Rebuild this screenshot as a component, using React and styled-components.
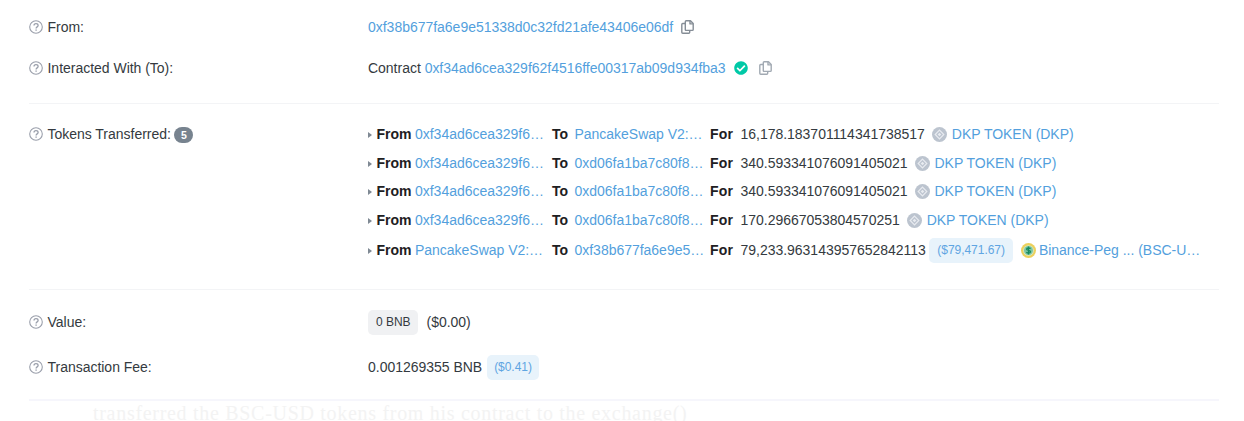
import React from "react";
import styled, { createGlobalStyle } from "styled-components";
import { FaCheckCircle } from "react-icons/fa";

const GlobalStyle = createGlobalStyle`
  * { box-sizing: border-box; }
  body {
    margin: 0;
    background: #fff;
    color: #343a40;
    font: 14px/20px "Liberation Sans", Arial, sans-serif;
    letter-spacing: -0.02px;
    overflow: hidden;
  }
`;

const Page = styled.main`
  width: 1244px;
  height: 421px;
  overflow: hidden;
  padding: 0 25px 0 29px;
`;

const Section = styled.section`
  height: ${(p) => p.$height}px;
  padding-top: ${(p) => p.$top}px;
  border-bottom: ${(p) => p.$line || 1}px solid ${(p) => p.$lineColor || "#f3f4f6"};
`;

const Row = styled.div`
  display: grid;
  grid-template-columns: 339px 1fr;
  align-items: start;
  margin-bottom: ${(p) => p.$gap || 0}px;
`;

const Label = styled.div`
  display: flex;
  align-items: center;
  height: 20px;
  white-space: pre;
`;

const HelpSvg = styled.svg`
  width: 14px;
  height: 14px;
  margin-right: 4.5px;
  fill: none;
  stroke: #9a9fab;
  flex: none;
`;

const Count = styled.span`
  width: 19px;
  height: 16px;
  margin: 2px 0 0 3.5px;
  border-radius: 8px;
  background: #77838f;
  color: #fff;
  font-size: 10.5px;
  font-weight: 700;
  line-height: 16px;
  text-align: center;
`;

const Value = styled.div`
  display: flex;
  align-items: center;
  height: 20px;
  white-space: pre;
`;

const Link = styled.a`
  color: #539fdd;
`;

const CopySvg = styled.svg`
  width: 13px;
  height: 14px;
  margin-left: ${(p) => p.$gap}px;
  fill: none;
  stroke: ${(p) => p.$tone};
  stroke-width: 1.4;
  stroke-linejoin: round;
  flex: none;
`;

const Verified = styled(FaCheckCircle)`
  width: 14px;
  height: 14px;
  margin-left: 8px;
  color: #00c9a7;
`;

const Transfers = styled.div`
  display: flex;
  flex-direction: column;
`;

const Transfer = styled.div`
  display: grid;
  grid-template-columns: 8.5px 38.5px 137px 22.5px 135.5px 30.5px auto;
  grid-template-rows: 20px;
  justify-content: start;
  align-items: center;
  height: 20px;
  margin-bottom: ${(p) => p.$gap}px;
  white-space: nowrap;
`;

const Caret = styled.i`
  width: 0;
  height: 0;
  margin-top: 2px;
  border: 3.5px solid transparent;
  border-left: 4px solid #7f8994;
  border-right: 0;
`;

const Strong = styled.b`
  color: #1e2022;
  letter-spacing: ${(p) => p.$track || 0}px;
`;

const Amount = styled.div`
  display: flex;
  align-items: center;
  height: 20px;
`;

const Pill = styled.span`
  height: 25px;
  padding: 0 ${(p) => p.$pad || 8}px;
  margin: 1px ${(p) => p.$right || 0}px 0 ${(p) => p.$left || 0}px;
  border-radius: 5px;
  background: ${(p) => (p.$plain ? "#f0f1f3" : "#e8f3fb")};
  color: ${(p) => (p.$plain ? "#343a40" : "#5fa5e2")};
  font-size: 12px;
  line-height: 25px;
  letter-spacing: -0.04px;
  flex: none;
`;

const IconSvg = styled.svg`
  width: 15px;
  height: 15px;
  margin: 0 ${(p) => p.$right}px 0 ${(p) => p.$left}px;
  flex: none;
`;

const Excerpt = styled.p`
  margin: 3px 0 0 64px;
  color: #f3f3f3;
  font: 20px/18px "Liberation Serif", serif;
  letter-spacing: 0.7px;
  height: 18px;
  white-space: nowrap;
`;

function HelpIcon() {
  return (
    <HelpSvg viewBox="0 0 14 14">
      <circle cx="7" cy="7" r="6.3" strokeWidth="1.1" />
      <path d="M5 5.6C5 4.3 5.8 3.7 7 3.7s2.1.7 2.1 1.8C9.1 6.9 7.1 6.9 7.1 8.5" strokeWidth="1.3" />
      <path d="M7.1 9.4v1.300" strokeWidth="1.4" />
    </HelpSvg>
  );
}

function CopyIcon({ gap, tone }) {
  return (
    <CopySvg $gap={gap} $tone={tone} viewBox="0 0 13 14">
      <path d="M5.2.8h4.300L12.2 3.5v6q0 .9-.9.9H5.2q-.9 0-.9-.9V1.7q0-.9.9-.9z" />
      <path d="M9 .9v3h3.1" />
      <path d="M4.2 3.5H1.7q-.9 0-.9.9v7.9q0 .9.9.9h6.1q.9 0 .9-.9v-1.7" />
    </CopySvg>
  );
}

function TokenIcon() {
  return (
    <IconSvg $left={7.5} $right={4.5} viewBox="0 0 15 15">
      <circle cx="7.5" cy="7.5" r="7.5" fill="#bcc4cf" />
      <path d="M7.5 3.2 11.8 7.5 7.5 11.8 3.2 7.5z" fill="none" stroke="#e8ebf0" strokeWidth="1.2" />
      <path d="M7.5 5.7 9.3 7.5 7.5 9.3 5.7 7.5z" fill="#e8ebf0" />
    </IconSvg>
  );
}

function DollarIcon() {
  return (
    <IconSvg $left={0} $right={3} viewBox="0 0 15 15">
      <circle cx="7.5" cy="7.5" r="7.5" fill="#ecd05c" />
      <circle cx="7.5" cy="7.5" r="5.3" fill="#d3e9c8" />
      <circle cx="7.5" cy="7.5" r="4.5" fill="#7cc5a3" />
      <path
        d="M9.5 5.7C8.7 4.7 5.6 4.7 5.6 6.2c0 1.500 3.900 1 3.900 2.600 0 1.600-3.100 1.500-4.100.4M7.5 3.500v8"
        fill="none"
        stroke="#168a5e"
        strokeWidth="1.3"
      />
    </IconSvg>
  );
}

const transfers = [
  { from: "0xf34ad6cea329f6…", to: "PancakeSwap V2:…", amount: "16,178.183701114341738517", gap: 9 },
  { from: "0xf34ad6cea329f6…", to: "0xd06fa1ba7c80f8…", amount: "340.593341076091405021", gap: 8 },
  { from: "0xf34ad6cea329f6…", to: "0xd06fa1ba7c80f8…", amount: "340.593341076091405021", gap: 9 },
  { from: "0xf34ad6cea329f6…", to: "0xd06fa1ba7c80f8…", amount: "170.29667053804570251", gap: 10 },
  { from: "PancakeSwap V2:…", to: "0xf38b677fa6e9e5…", amount: "79,233.963143957652842113", usd: "($79,471.67)", gap: 0 },
];

export default function App() {
  return (
    <>
      <GlobalStyle />
      <Page>
        <Section $height={104} $top={17}>
          <Row $gap={21}>
            <Label><HelpIcon />From:</Label>
            <Value>
              <Link>0xf38b677fa6e9e51338d0c32fd21afe43406e06df</Link>
              <CopyIcon gap={7.5} tone="#858d96" />
            </Value>
          </Row>
          <Row>
            <Label><HelpIcon />Interacted With (To):</Label>
            <Value>
              Contract <Link>0xf34ad6cea329f62f4516ffe00317ab09d934fba3</Link>
              <Verified />
              <CopyIcon gap={11} tone="#a1a9b2" />
            </Value>
          </Row>
        </Section>
        <Section $height={186} $top={20}>
          <Row>
            <Label><HelpIcon />Tokens Transferred:<Count>5</Count></Label>
            <Transfers>
              {transfers.map((t, i) => (
                <Transfer key={i} $gap={t.gap}>
                  <Caret />
                  <Strong>From</Strong>
                  <Link>{t.from}</Link>
                  <Strong>To</Strong>
                  <Link>{t.to}</Link>
                  <Strong $track={0.2}>For</Strong>
                  <Amount>
                    {t.amount}
                    {t.usd ? (
                      <>
                        <Pill $left={3.5} $right={8}>{t.usd}</Pill>
                        <DollarIcon />
                        <Link>Binance-Peg ... (BSC-U…</Link>
                      </>
                    ) : (
                      <>
                        <TokenIcon />
                        <Link>DKP TOKEN (DKP)</Link>
                      </>
                    )}
                  </Amount>
                </Transfer>
              ))}
            </Transfers>
          </Row>
        </Section>
        <Section $height={111} $top={22} $line={2} $lineColor="#f6f6fc">
          <Row $gap={25}>
            <Label><HelpIcon />Value:</Label>
            <Value><Pill $plain $right={8}>0 BNB</Pill>($0.00)</Value>
          </Row>
          <Row>
            <Label><HelpIcon />Transaction Fee:</Label>
            <Value>0.001269355 BNB<Pill $left={5} $pad={7}>($0.41)</Pill></Value>
          </Row>
        </Section>
        <Excerpt>transferred the BSC-USD tokens from his contract to the exchange()</Excerpt>
      </Page>
    </>
  );
}
